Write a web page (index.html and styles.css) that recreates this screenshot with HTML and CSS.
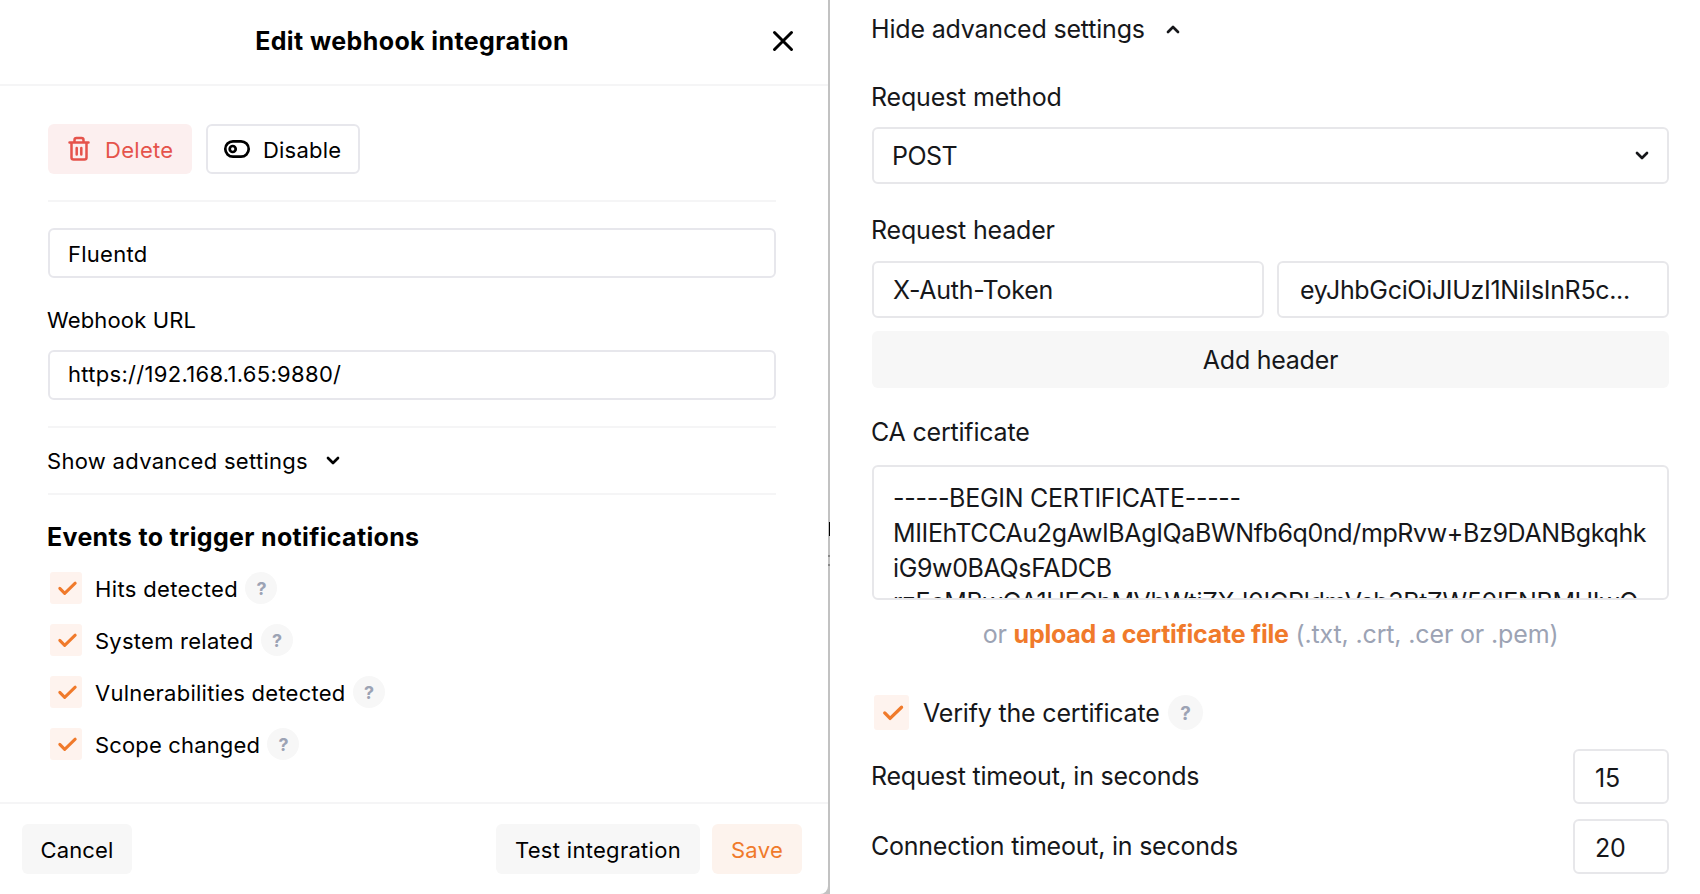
FILE: index.html
```html
<!DOCTYPE html>
<html lang="en">
<head>
<meta charset="utf-8">
<title>Edit webhook integration</title>
<link rel="stylesheet" href="styles.css">
</head>
<body>
<svg class="defs" width="0" height="0">
  <symbol id="check" viewBox="0 0 32 32"><path d="M9.8 16.4l4.9 5L25.2 11.2" fill="none" stroke="#f07a2b" stroke-width="3" stroke-linecap="round" stroke-linejoin="round"/></symbol>
  <symbol id="chevron" viewBox="0 0 14 9"><path d="M2 2l5 5 5-5" fill="none" stroke="currentColor" stroke-width="2.7" stroke-linecap="round" stroke-linejoin="round"/></symbol>
</svg>
<div class="screen">
  <section class="dialog">
    <header class="dialog-header">
      <h1 class="title">Edit webhook integration</h1>
      <svg class="close" viewBox="0 0 24 24"><path d="M3.5 3.5l17 17M20.500 3.500L3.500 20.500" fill="none" stroke="#000" stroke-width="3" stroke-linecap="round"/></svg>
    </header>
    <div class="dialog-body">
      <div class="actions">
        <button class="btn btn-delete"><svg class="i-trash" viewBox="0 0 24 26" fill="none" stroke="currentColor" stroke-width="2.5" stroke-linecap="round" stroke-linejoin="round"><path d="M2.500 6.500h19M7.500 6V4a2 2 0 0 1 2-2h5a2 2 0 0 1 2 2v2M4.500 7v14.500a2 2 0 0 0 2 2h11a2 2 0 0 0 2-2V7M9.700 12v6.500M14.300 12v6.500"/></svg><span>Delete</span></button>
        <button class="btn btn-disable"><svg class="i-toggle" viewBox="0 0 28 20" fill="none" stroke="currentColor" stroke-width="2.7"><rect x="2.300" y="2.300" width="23.400" height="15.400" rx="7.700"/><circle cx="9.700" cy="10" r="3"/></svg><span>Disable</span></button>
      </div>
      <div class="rule"></div>
      <div class="field name-field">Fluentd</div>
      <label class="label url-label">Webhook URL</label>
      <div class="field url">https://192.168.1.65:9880/</div>
      <div class="advanced"><span>Show advanced settings</span><svg class="chevron"><use href="#chevron"/></svg></div>
      <h2 class="events-title">Events to trigger notifications</h2>
      <div class="events">
        <div class="event"><svg class="check"><use href="#check"/></svg><span class="hits">Hits detected</span><i class="help">?</i></div>
        <div class="event"><svg class="check"><use href="#check"/></svg><span>System related</span><i class="help">?</i></div>
        <div class="event"><svg class="check"><use href="#check"/></svg><span>Vulnerabilities detected</span><i class="help">?</i></div>
        <div class="event"><svg class="check"><use href="#check"/></svg><span class="scope">Scope changed</span><i class="help">?</i></div>
      </div>
    </div>
    <footer class="dialog-footer">
      <button class="btn btn-cancel"><span>Cancel</span></button>
      <button class="btn btn-test"><span>Test integration</span></button>
      <button class="btn btn-save"><span>Save</span></button>
    </footer>
  </section>
  <div class="divider"><b class="mark mark-bar"></b><b class="mark mark-dot"></b><b class="mark mark-dot-low"></b></div>
  <section class="settings">
    <div class="hide-row"><span>Hide advanced settings</span><svg class="chevron up"><use href="#chevron"/></svg></div>
    <label class="caption method-caption">Request method</label>
    <div class="box select"><span>POST</span><svg class="chevron"><use href="#chevron"/></svg></div>
    <label class="caption header-caption">Request header</label>
    <div class="header-row">
      <div class="box">X-Auth-Token</div>
      <div class="box token">eyJhbGciOiJIUzI1NiIsInR5c...</div>
    </div>
    <button class="add">Add header</button>
    <label class="caption ca-caption">CA certificate</label>
    <div class="cert"><div class="cert-begin">-----BEGIN CERTIFICATE-----</div><div>MIIEhTCCAu2gAwIBAgIQaBWNfb6q0nd/mpRvw+Bz9DANBgkqhk</div><div>iG9w0BAQsFADCB</div><div class="cert-last">rzEeMBwGA1UEChMVbWtjZXJ0IGRldmVsb3BtZW50IENBMUIwQ</div></div>
    <p class="upload">or <b>upload a certificate file</b> (.txt, .crt, .cer or .pem)</p>
    <div class="verify"><svg class="check"><use href="#check"/></svg><span>Verify the certificate</span><i class="help">?</i></div>
    <div class="timeout"><span>Request timeout, in seconds</span><div class="num">15</div></div>
    <div class="timeout"><span>Connection timeout, in seconds</span><div class="num">20</div></div>
  </section>
</div>
</body>
</html>
```
FILE: styles.css
```css
* { box-sizing: border-box; }
body { margin: 0; background: #fff; font-family: Inter, "Liberation Sans", sans-serif; color: #000; }
.defs { position: absolute; }
button { border: 0; font: inherit; color: inherit; }
.screen { display: flex; width: 1700px; height: 894px; overflow: hidden; background: linear-gradient(to right, #c2c2c2 830px, #fff 830px); }

/* Dialog */
.dialog { width: 828px; display: flex; flex-direction: column; font-size: 22px; letter-spacing: 0.25px; background: #fff; border-bottom-right-radius: 8px; }
.dialog-header { height: 86px; border-bottom: 2px solid #f5f5f6; display: flex; align-items: center; padding: 0 33px 2px 48px; }
.title { flex: 1; margin: 0 19px 0 0; text-align: center; font-size: 25px; font-weight: 700; letter-spacing: 0.4px; }
.close { width: 24px; height: 24px; margin-left: -24px; }
.dialog-body { height: 716px; padding: 38px 52px 0 48px; }
.actions { display: flex; gap: 14px; }
.btn { height: 50px; border-radius: 6px; display: flex; align-items: center; padding: 0; letter-spacing: 0.3px; white-space: nowrap; }
.btn span { padding-top: 2px; }
.btn-delete { width: 144px; background: #fcefef; color: #e5534b; padding-left: 19px; gap: 14px; }
.btn-disable { width: 154px; background: #fff; border: 2px solid #e7e7ec; padding-left: 15px; gap: 12px; letter-spacing: 0.2px; }
.i-trash { width: 24px; height: 26px; }
.i-toggle { width: 28px; height: 20px; }
.rule { height: 2px; margin: 26px 0; background: #f5f5f6; }
.field { height: 50px; border: 2px solid #e7e7ec; border-radius: 6px; padding-left: 18px; display: flex; align-items: center; }
.name-field { padding-top: 1px; }
.label { display: block; }
.url-label { height: 28px; line-height: 28px; margin: 28px 0 16px -1px; letter-spacing: 0.15px; }
.url { padding-bottom: 2px; letter-spacing: 0.3px; }
.advanced { height: 69px; margin-top: 26px; border: solid #f5f5f6; border-width: 2px 0; display: flex; align-items: center; gap: 18px; }
.advanced span { margin-left: -1px; letter-spacing: 0.3px; }
.chevron { width: 14px; height: 9px; }
.up { transform: rotate(180deg); }
.events-title { margin: 27px 0 20px -1px; height: 30px; line-height: 30px; font-size: 25px; font-weight: 700; letter-spacing: 0.33px; }
.events { display: flex; flex-direction: column; gap: 20px; padding-left: 2px; }
.event { display: flex; align-items: center; height: 32px; letter-spacing: 0.25px; }
.check { width: 32px; height: 32px; border-radius: 3px; background: #fef3ee; }
.event span { margin: 0 7px 0 13px; padding-top: 1px; }
.event .hits { letter-spacing: 0.35px; }
.event .scope { letter-spacing: 0.15px; }
.help { width: 32px; height: 32px; border-radius: 50%; background: #f7f7f7; color: #9ca3b4; font-style: normal; font-weight: 700; font-size: 18px; display: flex; align-items: center; justify-content: center; letter-spacing: 0; padding: 1px 0 0 1px; }
.dialog-footer { height: 92px; border-top: 2px solid #f5f5f6; padding: 20px 26px 0 22px; display: flex; }
.dialog-footer .btn { justify-content: center; background: #f7f7f7; }
.dialog-footer .btn-cancel { width: 110px; margin-right: auto; letter-spacing: 0.15px; }
.dialog-footer .btn-test { width: 204px; margin-right: 12px; }
.dialog-footer .btn-save { width: 90px; background: #fdf3ed; color: #f07a2b; }

/* Strip between the panes */
.divider { width: 2px; position: relative; }
.mark { position: absolute; left: 0; width: 2px; height: 2px; background: #888; }
.mark-bar { left: 1px; top: 522px; width: 1px; height: 14px; background: #000; }
.mark-dot { top: 555px; }
.mark-dot-low { top: 564px; }

/* Advanced settings */
.settings { width: 870px; padding: 13px 31px 0 42px; font-size: 25px; letter-spacing: -0.18px; color: #16171a; }
.hide-row { height: 32px; display: flex; align-items: center; gap: 21px; margin-left: -1px; }
.caption { display: block; height: 32px; line-height: 32px; }
.settings .method-caption { margin: 36px 0 14px -1px; }
.box { height: 57px; border: 2px solid #e7e7ea; border-radius: 6px; padding: 0 19px; display: flex; align-items: center; white-space: nowrap; letter-spacing: -0.27px; }
.select { justify-content: space-between; padding: 0 18px; letter-spacing: -0.5px; }
.settings .header-caption { margin: 30px 0 15px -1px; }
.header-row { display: grid; grid-template-columns: 392px 392px; gap: 13px; }
.token { padding-left: 21px; letter-spacing: -0.32px; }
.add { width: 797px; height: 57px; margin-top: 13px; border-radius: 6px; background: #f7f7f7; display: block; letter-spacing: -0.25px; }
.settings .ca-caption { margin: 28px 0 17px -1px; letter-spacing: -0.2px; }
.cert { height: 135px; border: 2px solid #e7e7ea; border-radius: 6px; overflow: hidden; padding: 14px 19px; line-height: 35px; white-space: nowrap; letter-spacing: -0.37px; }
.cert-begin { letter-spacing: -0.28px; }
.cert-last { margin-top: -1px; }
.upload { margin: 18px 0 0; height: 32px; line-height: 32px; text-align: center; color: #9ca3b4; white-space: nowrap; letter-spacing: -0.15px; }
.upload b { color: #f07a2b; font-weight: 700; letter-spacing: -0.25px; }
.verify { display: flex; align-items: center; height: 35px; margin: 45px 0 19px; padding-left: 2px; }
.verify span { margin: 0 8px 0 14px; }
.verify .check, .verify .help { width: 35px; height: 35px; }
.verify .help { font-size: 19px; }
.timeout { display: flex; justify-content: space-between; height: 55px; margin-bottom: 15px; align-items: center; }
.timeout span { padding-bottom: 1px; margin-left: -1px; letter-spacing: -0.23px; }
.num { width: 96px; height: 55px; border: 2px solid #e7e7ea; border-radius: 6px; padding: 2px 0 0 20px; display: flex; align-items: center; }
.settings { background: #fff; }
```
